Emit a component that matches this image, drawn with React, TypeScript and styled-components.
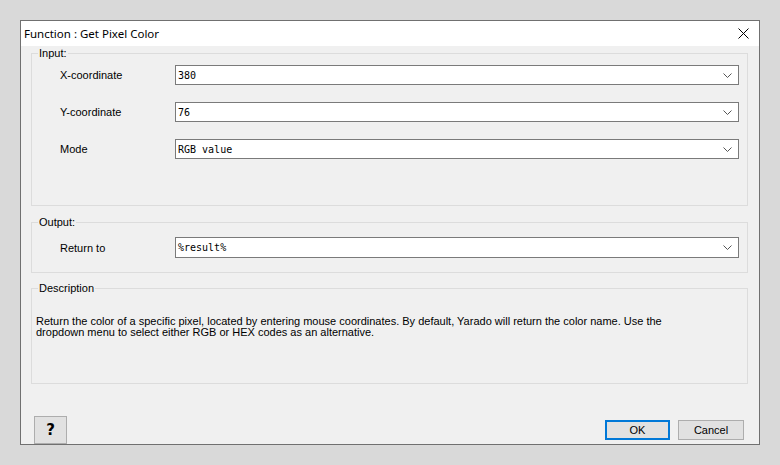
import React from "react";
import styled, { createGlobalStyle } from "styled-components";

const GlobalStyle = createGlobalStyle`
  html, body {
    margin: 0;
    padding: 0;
    background: #d9d9d9;
  }
  body {
    font-family: "Liberation Sans", Arial, sans-serif;
    font-size: 11px;
    color: #000;
  }
`;

const Dialog = styled.div`
  box-sizing: border-box;
  width: 740px;
  height: 425px;
  margin: 20px 0 0 20px;
  border: 1px solid #707070;
  background: #f0f0f0;
  display: flex;
  flex-direction: column;
`;

const TitleBar = styled.div`
  height: 25px;
  flex: none;
  background: #fff;
  display: flex;
  align-items: center;
  justify-content: space-between;
  padding-left: 3px;
`;

const Title = styled.span`
  font-family: "Noto Sans", "Liberation Sans", sans-serif;
  font-size: 11.5px;
  color: #000;
`;

const CloseButton = styled.button`
  border: none;
  background: transparent;
  width: 30px;
  height: 25px;
  padding: 0;
  margin-right: 1px;
  display: flex;
  align-items: center;
  justify-content: center;
`;

const Body = styled.div`
  flex: 1;
  display: flex;
  flex-direction: column;
  padding: 0 11px 0 10px;
`;

const Group = styled.fieldset<{ $h: number; $top: number }>`
  box-sizing: border-box;
  margin: ${(p) => p.$top}px 0 0;
  padding: 0;
  min-width: 0;
  height: ${(p) => p.$h}px;
  border: 1px solid #dcdcdc;
`;

const Legend = styled.legend`
  margin-left: 6px;
  padding: 0 1px;
  line-height: 13px;
  font-size: 11px;
`;

const Rows = styled.div<{ $top: number }>`
  display: flex;
  flex-direction: column;
  gap: 17px;
  padding: ${(p) => p.$top}px 8px 0 28px;
`;

const Row = styled.div`
  display: grid;
  grid-template-columns: 115px 1fr;
  align-items: center;
`;

const Label = styled.span`
  font-size: 11px;
`;

const Combo = styled.div<{ $h: number }>`
  box-sizing: border-box;
  height: ${(p) => p.$h}px;
  border: 1px solid #7a7a7a;
  background: #fff;
  display: flex;
  align-items: center;
  justify-content: space-between;
  padding: 0 6px 0 2px;
`;

const Value = styled.span`
  font-family: "DejaVu Sans Mono", "Liberation Mono", monospace;
  font-size: 10px;
`;

const DescText = styled.p`
  margin: 0;
  padding: 21px 0 0 4px;
  line-height: 11px;
  font-size: 11px;
`;

const Footer = styled.div`
  display: flex;
  align-items: flex-start;
  padding: 20px 15px 0 13px;
  gap: 8px;
`;

const Button = styled.button<{ $primary?: boolean }>`
  box-sizing: border-box;
  width: ${(p) => (p.$primary ? 65 : 66)}px;
  height: 20px;
  margin-top: 4px;
  padding: 0;
  background: #e1e1e1;
  border: ${(p) => (p.$primary ? "2px solid #0078d7" : "1px solid #adadad")};
  font-family: "Liberation Sans", Arial, sans-serif;
  font-size: 11px;
  color: #000;
`;

const HelpButton = styled(Button)`
  width: 33px;
  height: 28px;
  margin: 0 auto 0 0;
  font-family: "DejaVu Sans", sans-serif;
  font-size: 15px;
  font-weight: bold;
`;

const Chevron = () => (
  <svg width="9" height="5" viewBox="0 0 9 5">
    <path d="M0.5 0.5 L4.5 4.5 L8.5 0.5" fill="none" stroke="#555" strokeWidth="1" />
  </svg>
);

function Field({ label, value, h = 20 }: { label: string; value: string; h?: number }) {
  return (
    <Row>
      <Label>{label}</Label>
      <Combo $h={h}>
        <Value>{value}</Value>
        <Chevron />
      </Combo>
    </Row>
  );
}

export default function App() {
  return (
    <>
      <GlobalStyle />
      <Dialog>
        <TitleBar>
          <Title>Function : Get Pixel Color</Title>
          <CloseButton aria-label="Close">
            <svg width="11" height="11" viewBox="0 0 11 11">
              <path d="M0.5 0.5 L10.5 10.5 M10.5 0.5 L0.5 10.5" stroke="#000" strokeWidth="1" />
            </svg>
          </CloseButton>
        </TitleBar>
        <Body>
          <Group $top={1} $h={159}>
            <Legend>Input:</Legend>
            <Rows $top={5}>
              <Field label="X-coordinate" value="380" />
              <Field label="Y-coordinate" value="76" />
              <Field label="Mode" value="RGB value" />
            </Rows>
          </Group>
          <Group $top={10} $h={57}>
            <Legend>Output:</Legend>
            <Rows $top={8}>
              <Field label="Return to" value="%result%" h={21} />
            </Rows>
          </Group>
          <Group $top={9} $h={102}>
            <Legend>Description</Legend>
            <DescText>
              Return the color of a specific pixel, located by entering mouse coordinates. By default, Yarado will
              return the color name. Use the
              <br />
              dropdown menu to select either RGB or HEX codes as an alternative.
            </DescText>
          </Group>
        </Body>
        <Footer>
          <HelpButton>?</HelpButton>
          <Button $primary>OK</Button>
          <Button>Cancel</Button>
        </Footer>
      </Dialog>
    </>
  );
}
